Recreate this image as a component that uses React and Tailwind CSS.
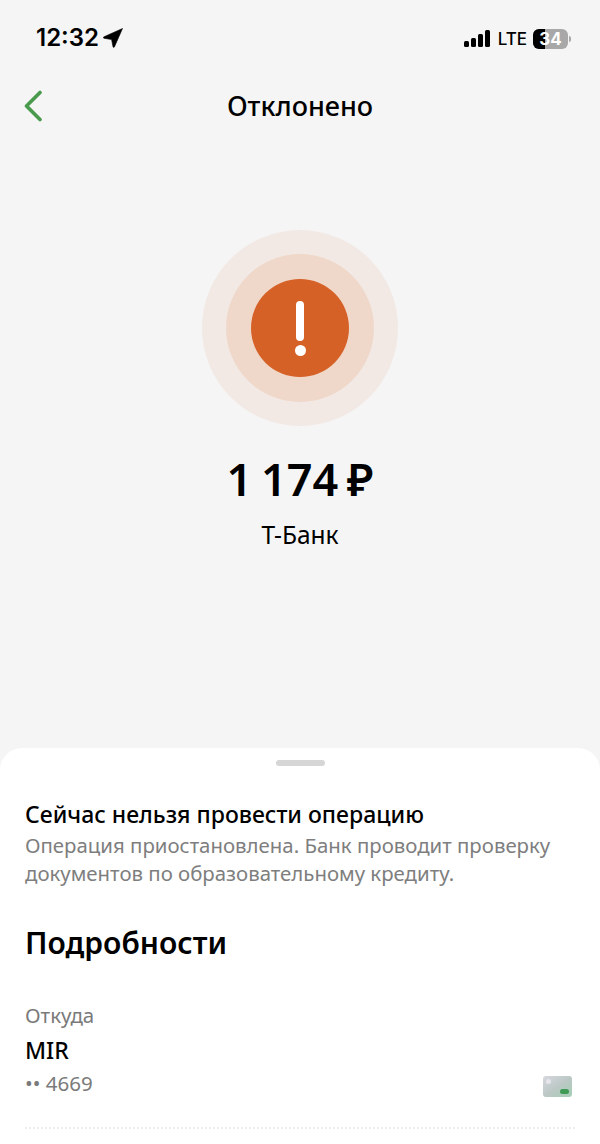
export default function App() {
  return (
    <div className="w-[600px] h-[1144px] overflow-hidden bg-[#f5f5f5] flex flex-col font-['Noto_Sans',sans-serif] text-black">
      <div className="h-[76px] shrink-0 flex justify-between pt-[22px] pl-[36px] pr-[29px]">
        <div className="flex items-center h-[32px] gap-[4px]">
          <span className="font-['Inter',sans-serif] font-semibold text-[24px] leading-[32px]">12:32</span>
          <svg width="20" height="20" viewBox="0 0 20 20"><path d="M19.5 0.5 L11.4 19 Q10.4 20 10 18.8 L8.6 11.6 L0.8 10.2 Q-0.2 9.4 1 8.8 Z" fill="#000" stroke="#000" strokeWidth="0.6" /></svg>
        </div>
        <div className="flex items-center h-[32px]">
          <svg width="28" height="20" viewBox="0 0 28 20" className="mr-[6px] mt-[2px]">
            <rect x="0" y="12" width="5" height="6" rx="1.5" fill="#000"/>
            <rect x="7" y="9" width="5" height="9" rx="1.5" fill="#000"/>
            <rect x="14" y="5" width="5" height="13" rx="1.5" fill="#000"/>
            <rect x="21" y="1" width="5" height="17" rx="1.5" fill="#000"/>
          </svg>
          <span className="font-['Inter',sans-serif] text-[17px] leading-[32px] mr-[6px] mt-[2px] font-medium">LTE</span>
          <div className="relative w-[35px] h-[20px] rounded-[6px] bg-[#a8a8a8] overflow-hidden flex items-center justify-center mt-[1px]">
            <div className="absolute left-0 top-0 bottom-0 w-[12px] bg-black" />
            <span className="relative font-['Inter',sans-serif] font-bold text-white text-[17px] leading-[20px]">34</span>
          </div>
          <div className="w-[2px] h-[6px] ml-[1px] mt-[1px] rounded-r bg-[#a8a8a8]" />
        </div>
      </div>
      <div className="relative h-[60px] shrink-0 flex items-center justify-center">
        <svg width="20" height="32" viewBox="0 0 20 32" className="absolute left-[24px] top-[14px]">
          <path d="M16 2.5 L2.5 16 L16 29.5" fill="none" stroke="#4a9a4d" strokeWidth="3.6" strokeLinecap="round" strokeLinejoin="round"/>
        </svg>
        <span className="text-[27px] leading-[32px] font-[550] -mt-[1px]">Отклонено</span>
      </div>
      <div className="flex flex-col items-center pt-[94px]">
        <div className="w-[196px] h-[196px] rounded-full bg-[#f2e9e5] flex items-center justify-center">
          <div className="w-[148px] h-[148px] rounded-full bg-[#efd8c9] flex items-center justify-center">
            <div className="w-[98px] h-[98px] rounded-full bg-[#d66127] flex flex-col items-center justify-center pt-px">
              <div className="w-[8px] h-[40px] rounded-full bg-white" />
              <div className="w-[11px] h-[11px] rounded-full bg-white mt-[4px]" />
            </div>
          </div>
        </div>
        <div className="mt-[23px] text-[45px] leading-[60px] font-semibold [word-spacing:-3px]">1 174 ₽</div>
        <div className="mt-[10px] text-[24.5px] leading-[32px]">Т-Банк</div>
      </div>
      <div className="mt-auto h-[396px] shrink-0 bg-white rounded-t-[22px] px-[25px] flex flex-col">
        <div className="self-center w-[49px] h-[6px] rounded-full bg-[#d6d6d6] mt-[12px]" />
        <div className="mt-[32px] text-[23px] leading-[32px] font-medium">Сейчас нельзя провести операцию</div>
        <div className="mt-[1px] text-[20.4px] leading-[28px] text-[#7e7e7e]">Операция приостановлена. Банк проводит проверку<br />документов по образовательному кредиту.</div>
        <div className="mt-[35px] text-[30px] leading-[42px] font-semibold">Подробности</div>
        <div className="mt-[37px] text-[20.5px] leading-[28px] text-[#7a7a7a]">Откуда</div>
        <div className="relative mt-[5px] text-[23px] leading-[32px] font-medium">MIR</div>
        <div className="relative mt-[3px] flex items-center h-[28px] text-[20.5px] leading-[28px] text-[#7a7a7a]">
          <span>•• 4669</span>
          <div className="absolute right-[3px] top-[7px] w-[29px] h-[21px] rounded-[3px] bg-gradient-to-br from-[#d8d8e0] via-[#bcc8c6] to-[#a5cdb4] flex items-end justify-end p-[3px]">
            <div className="absolute left-[3px] top-[3px] w-[5px] h-[5px] rounded-full bg-[#e6e6ec]" />
            <div className="w-[9px] h-[5px] rounded-full bg-[#3f9a55]" />
          </div>
        </div>
        <div className="mt-[30px] border-t-2 border-dotted border-[#ededed]" />
      </div>
    </div>
  );
}
